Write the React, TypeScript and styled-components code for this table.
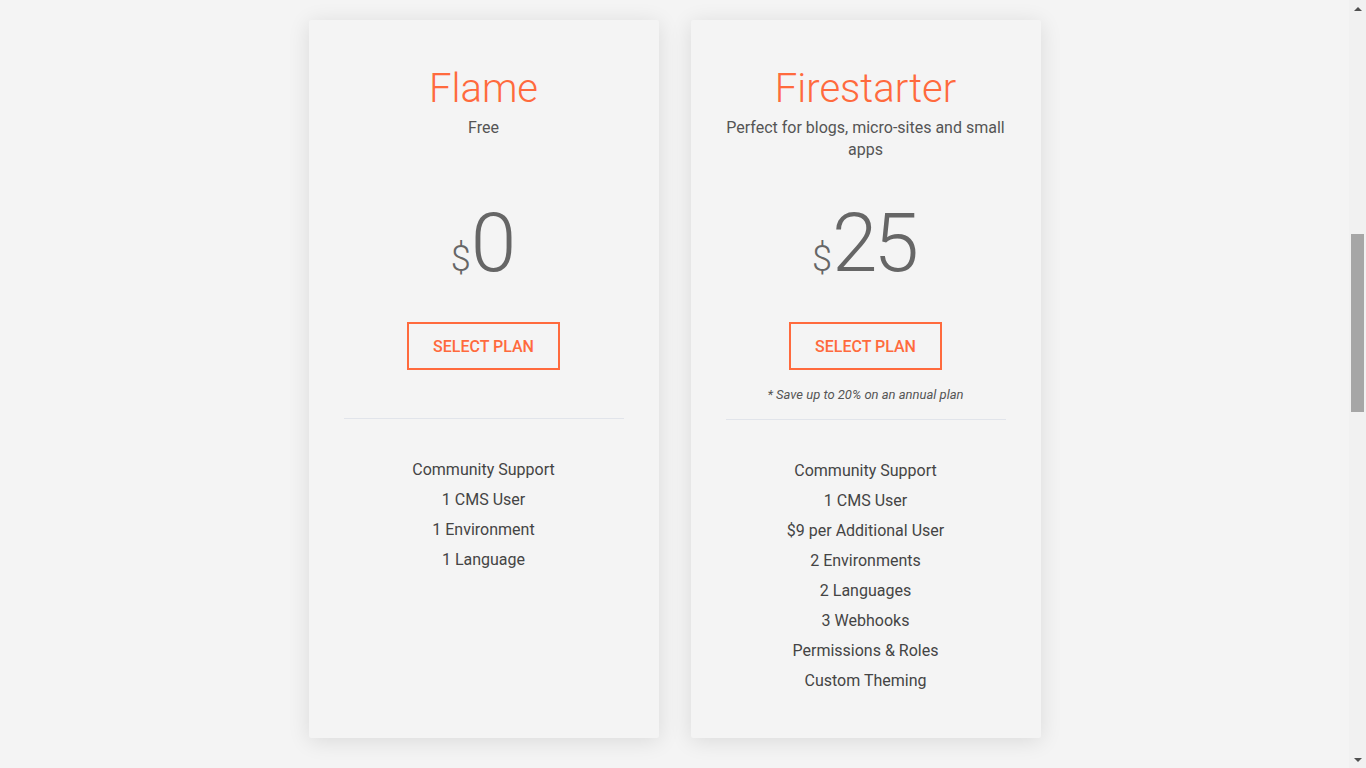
import React from "react";
import styled, { createGlobalStyle } from "styled-components";

const GlobalStyle = createGlobalStyle`
  body {
    margin: 0;
    background: #f4f4f4;
    font-family: Roboto, "Liberation Sans", Arial, sans-serif;
    -webkit-font-smoothing: antialiased;
  }
  * { box-sizing: border-box; }
`;

const ORANGE = "#ff6a3d";

const Shell = styled.div`
  display: flex;
  align-items: flex-start;
  min-height: 100vh;
`;

const Page = styled.main`
  flex: 1;
  display: flex;
  justify-content: center;
  align-items: stretch;
  gap: 32px;
  padding: 20px 0 30px;
`;

const ScrollBar = styled.div`
  position: sticky;
  top: 0;
  width: 17px;
  height: 100vh;
  background: #f1f1f1;
  display: flex;
  flex-direction: column;
  align-items: center;
  flex-shrink: 0;
`;

const Arrow = styled.div<{ $down?: boolean }>`
  height: 17px;
  width: 17px;
  display: flex;
  align-items: center;
  justify-content: center;
  &::before {
    content: "";
    width: 0;
    height: 0;
    border-left: 4px solid transparent;
    border-right: 4px solid transparent;
    ${(p) =>
      p.$down
        ? "border-top: 4px solid #505050;"
        : "border-bottom: 4px solid #505050;"}
  }
`;

const Track = styled.div`
  position: relative;
  flex: 1;
  width: 100%;
`;

const Thumb = styled.div`
  position: absolute;
  left: 2px;
  right: 2px;
  top: 217px;
  height: 178px;
  background: #a6a6a6;
`;

const Card = styled.section`
  width: 350px;
  background: #f4f4f4;
  border-radius: 2px;
  box-shadow: 0 3px 22px rgba(0, 0, 0, 0.11);
  padding: 45px 35px 42px;
  display: flex;
  flex-direction: column;
  align-items: center;
  text-align: center;
`;

const Title = styled.h2`
  margin: 0;
  font-weight: 300;
  font-size: 40px;
  line-height: 48px;
  color: ${ORANGE};
`;

const Subtitle = styled.p`
  margin: 4px 0 0;
  min-height: 44px;
  font-size: 16px;
  line-height: 22px;
  color: #555;
`;

const Price = styled.div`
  margin-top: 41px;
  height: 84px;
  display: flex;
  align-items: baseline;
  justify-content: center;
  color: #666;
  font-weight: 300;
`;

const Currency = styled.span`
  font-size: 36px;
  line-height: 36px;
`;

const Amount = styled.span`
  font-size: 82px;
  line-height: 82px;
  letter-spacing: -4px;
  margin-right: 4px;
`;

const SelectButton = styled.button`
  margin-top: 36px;
  height: 48px;
  width: 153px;
  padding: 0;
  background: transparent;
  border: 2px solid ${ORANGE};
  color: ${ORANGE};
  font-family: inherit;
  font-weight: 500;
  font-size: 16px;
  cursor: pointer;
`;

const Note = styled.p`
  margin: 16px 0 0;
  height: 18px;
  font-size: 13px;
  line-height: 18px;
  font-style: italic;
  color: #555;
`;

const Divider = styled.hr<{ $offset?: number }>`
  align-self: stretch;
  margin: ${(p) => 14 + (p.$offset ?? 0)}px 0 36px;
  border: 0;
  border-top: 1px solid #e1e4ea;
`;

const Features = styled.ul`
  list-style: none;
  margin: 0;
  padding: 0;
`;

const Feature = styled.li`
  font-size: 16px;
  line-height: 30px;
  color: #444;
`;

type Plan = {
  name: string;
  subtitle: string;
  price: string;
  note?: string;
  features: string[];
};

const plans: Plan[] = [
  {
    name: "Flame",
    subtitle: "Free",
    price: "0",
    features: ["Community Support", "1 CMS User", "1 Environment", "1 Language"],
  },
  {
    name: "Firestarter",
    subtitle: "Perfect for blogs, micro-sites and small apps",
    price: "25",
    note: "* Save up to 20% on an annual plan",
    features: [
      "Community Support",
      "1 CMS User",
      "$9 per Additional User",
      "2 Environments",
      "2 Languages",
      "3 Webhooks",
      "Permissions & Roles",
      "Custom Theming",
    ],
  },
];

export default function App() {
  return (
    <>
      <GlobalStyle />
      <Shell>
        <Page>
          {plans.map((plan) => (
            <Card key={plan.name}>
              <Title>{plan.name}</Title>
              <Subtitle>{plan.subtitle}</Subtitle>
              <Price>
                <Currency>$</Currency>
                <Amount>{plan.price}</Amount>
              </Price>
              <SelectButton>SELECT PLAN</SelectButton>
              <Note>{plan.note ?? ""}</Note>
              <Divider $offset={plan.note ? 1 : 0} />
              <Features>
                {plan.features.map((f) => (
                  <Feature key={f}>{f}</Feature>
                ))}
              </Features>
            </Card>
          ))}
        </Page>
        <ScrollBar aria-hidden>
          <Arrow />
          <Track>
            <Thumb />
          </Track>
          <Arrow $down />
        </ScrollBar>
      </Shell>
    </>
  );
}
